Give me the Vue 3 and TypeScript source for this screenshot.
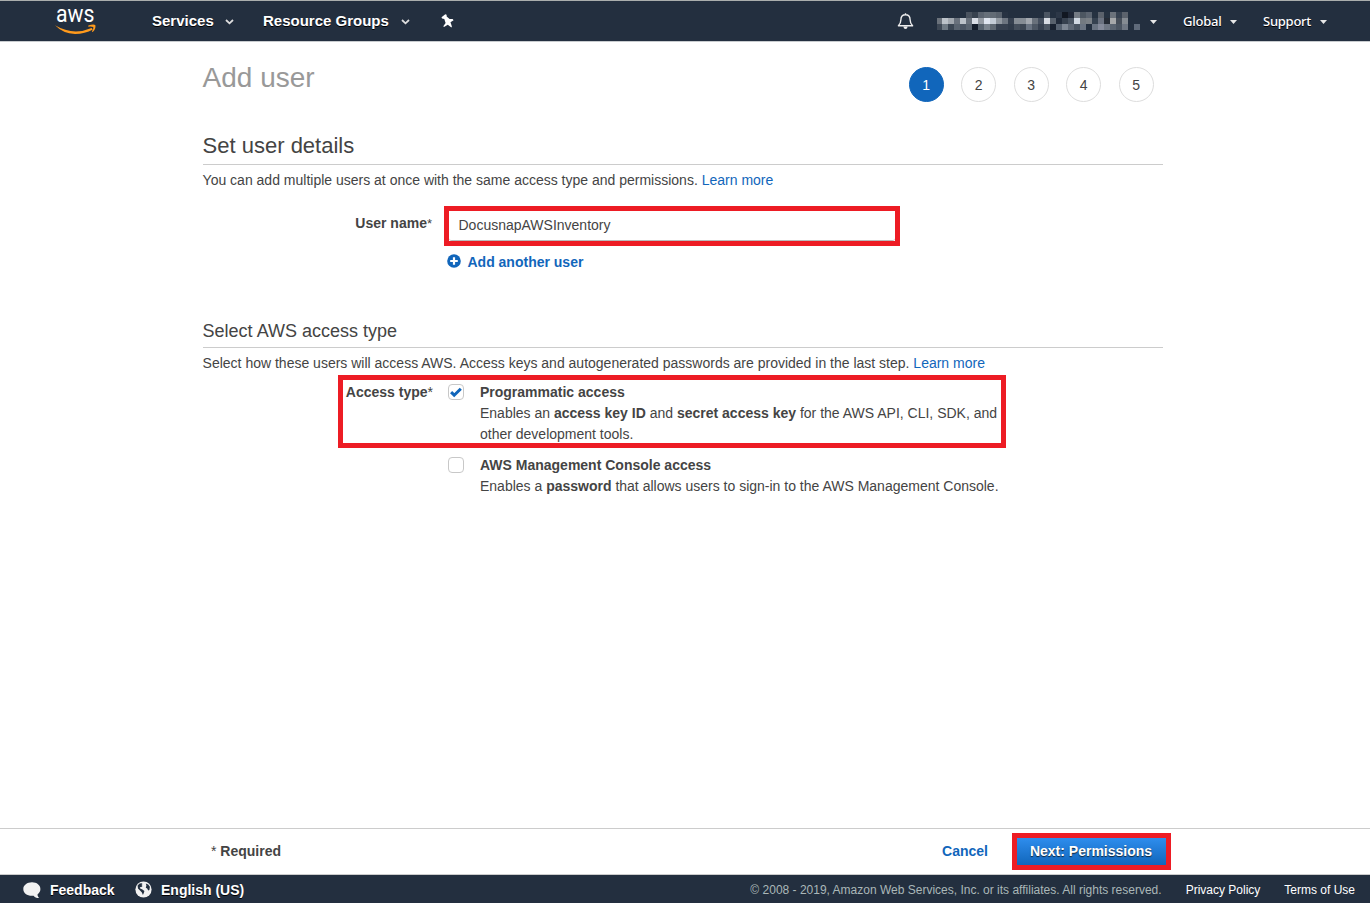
<script setup lang="ts">
import { ref } from 'vue'

const userName = ref('DocusnapAWSInventory')
const steps = [1, 2, 3, 4, 5]
const current = 1

// Colours of the masked account label, one array per row of cells
const mask: string[][] = [
  '232f3f 232f3f 232f3f 232f3f 232f3f 4a535f 38424f 5b6470 666f79 626b75 59626d 273242 232f3f 232f3f 232f3f 232f3f 232f3f 232f3f 4b5562 232f3f 2c3747 111722 202838 737a83 4c5661 5b6470 263241 5b626c 263241 6b727b 364150 5b626c'.split(' '),
  '6b727b bcc2c9 a2a8af 69717c bcc2c9 69717c d9dde5 969ca4 e0e6f0 c4ccd6 9299a1 6d7580 36404f 858c94 858c94 a3a8af 69717b 454f5e d7dbe3 58616d 202a3a 37414f 4a5563 d0d8e2 737a81 7a8086 364250 6b7280 262c36 a6a8aa 464e59 858b92'.split(' '),
  '3e4855 6f7a84 3b4653 5a6470 4c5664 5a6470 141d2b 56616d 7c858f 5f6872 36404f 36404f 2f3a49 444e5b 3c4653 6a7482 4d5764 36404f 4d5764 182130 566170 7e8794 5f6977 4a5563 6a7482 232f3f 6a7482 858b9b 6f7784 5a6471 4a5461 6f7783 232f3f 5f6a7a'.split(' '),
]
</script>

<template>
  <div class="page">
    <header class="topbar">
      <svg class="logo" width="44" height="30" viewBox="0 0 44 30">
        <text x="2" y="16.3" textLength="38.5" lengthAdjust="spacingAndGlyphs">aws</text>
        <path d="M1 19.3 Q19 30 37.6 22 L38.8 23.6 Q31 28 21 28 Q9 27.6 1 19.3Z" fill="#ff9a1c" />
        <path d="M34.3 19.4 Q40 17.8 41.4 19.2 Q42 22.8 38.7 26 L37.9 25.6 Q39.8 22.3 39.3 21.1 Q38 20.4 34.3 20.7Z" fill="#ff9a1c" />
      </svg>
      <a class="nav services">Services</a>
      <svg class="chev" width="9" height="6" viewBox="0 0 9 6"><path d="M1 1 L4.5 4.3 L8 1" /></svg>
      <a class="nav groups">Resource Groups</a>
      <svg class="chev" width="9" height="6" viewBox="0 0 9 6"><path d="M1 1 L4.5 4.3 L8 1" /></svg>
      <svg class="pin" width="14" height="15" viewBox="0 0 14 15">
        <path d="M4.3 0.3 L5.6 0.8 L5.7 2.4 L8.6 5 L11.6 4.9 L12.6 6.3 L9.5 8.2 L10.9 12.4 L10.4 13.6 L6.8 10.8 L3 12.9 L2.3 12.3 L4.6 9 L3.3 4.9 L1 4.4 L0.5 3.2Z" fill="#fff" />
      </svg>
      <div class="right">
        <svg class="bell" width="17" height="18" viewBox="0 0 17 18">
          <path d="M8.5 1.2 V2.4 M1.4 13.7 C3.6 11.7 3.9 10.5 3.9 7.8 C3.9 4.4 5.8 2.7 8.5 2.7 C11.2 2.7 13.1 4.4 13.1 7.8 C13.1 10.5 13.4 11.7 15.6 13.7Z" fill="none" stroke="#eee" stroke-width="1.4" stroke-linejoin="round" />
          <path d="M6.3 14.4 H10.7 Q10.3 17 8.5 17 Q6.7 17 6.3 14.4Z" fill="#eee" />
        </svg>
        <div class="mask">
          <div v-for="(row, r) in mask" :key="r" class="mask-row">
            <i v-for="(c, i) in row" :key="i" :style="{ background: '#' + c }"></i>
          </div>
        </div>
        <svg class="caret" width="7" height="4" viewBox="0 0 7 4"><path d="M0 0H7L3.5 4Z" /></svg>
        <a class="small global">Global</a>
        <svg class="caret" width="7" height="4" viewBox="0 0 7 4"><path d="M0 0H7L3.5 4Z" /></svg>
        <a class="small support">Support</a>
        <svg class="caret" width="7" height="4" viewBox="0 0 7 4"><path d="M0 0H7L3.5 4Z" /></svg>
      </div>
    </header>

    <main>
      <div class="title-row">
        <h1>Add user</h1>
        <ol class="steps">
          <li v-for="s in steps" :key="s" :class="{ active: s === current }">{{ s }}</li>
        </ol>
      </div>

      <h2>Set user details</h2>
      <p class="intro">You can add multiple users at once with the same access type and permissions. <a>Learn more</a></p>

      <div class="field">
        <label for="user">User name<span>*</span></label>
        <div class="marked-input"><input id="user" v-model="userName" type="text" spellcheck="false" /></div>
      </div>
      <a class="add">
        <svg width="14" height="14" viewBox="0 0 14 14"><circle cx="7" cy="7" r="6.8" fill="#1166bb" /><path d="M7 3.2V10.8M3.2 7H10.8" stroke="#fff" stroke-width="2.2" /></svg>
        Add another user
      </a>

      <h3>Select AWS access type</h3>
      <p class="intro second">Select how these users will access AWS. Access keys and autogenerated passwords are provided in the last step. <a>Learn more</a></p>

      <div class="option marked">
        <span class="option-label">Access type<span>*</span></span>
        <span class="box"><svg width="14" height="14" viewBox="0 0 14 14"><path d="M2.1 7.2 L5.2 10.2 L11.8 3.7" fill="none" stroke="#1166bb" stroke-width="3" /></svg></span>
        <div class="desc">
          <b>Programmatic access</b><br />
          Enables an <b>access key ID</b> and <b>secret access key</b> for the AWS API, CLI, SDK, and<br />other development tools.
        </div>
      </div>
      <div class="option">
        <span class="option-label"></span>
        <span class="box"></span>
        <div class="desc">
          <b>AWS Management Console access</b><br />
          Enables a <b>password</b> that allows users to sign-in to the AWS Management Console.
        </div>
      </div>
    </main>

    <div class="actions">
      <span class="required"><span>*</span> Required</span>
      <a class="cancel">Cancel</a>
      <button type="button">Next: Permissions</button>
    </div>

    <footer>
      <svg class="bubble" width="18" height="17" viewBox="0 0 18 17"><path d="M9 0.2C13.8 0.2 17.4 3 17.4 7C17.4 9.3 16.3 11.2 14.5 12.4C14.6 14 15.3 15.2 16.3 16.1C13.6 16.2 11.6 15.2 10.6 13.7C4.8 14.4 0.3 11.5 0.3 7C0.3 3 4.2 0.2 9 0.2Z" fill="#f2f2f2" /></svg>
      <a class="foot-bold feedback">Feedback</a>
      <svg class="globe" width="17" height="17" viewBox="0 0 17 17">
        <circle cx="8.5" cy="8.5" r="8.1" fill="#f2f2f2" />
        <path d="M2.6 4.6 L4.6 2.6 L6.6 2.2 L7.6 3 L6.4 4 L7.6 5 L6 6.2 L4.8 6 L5.2 7.4 L7.4 8.4 L9.4 10 L8.8 12 L7.9 14 L6.9 11.6 L5 9.6 L3 7.4Z M10.8 2.4 L13.2 3.4 L14.9 5.8 L14.4 9 L13.2 9.4 L12.2 7.4 L10.8 6.8 L11.4 4.6Z" fill="#232f3f" />
      </svg>
      <a class="foot-bold">English (US)</a>
      <span class="copy">© 2008 - 2019, Amazon Web Services, Inc. or its affiliates. All rights reserved.</span>
      <a class="legal privacy">Privacy Policy</a>
      <a class="legal">Terms of Use</a>
    </footer>
  </div>
</template>

<style>
body {
  overflow: hidden;
}
</style>

<style scoped>
* {
  box-sizing: border-box;
}
.page {
  width: 1370px;
  height: 903px;
  display: flex;
  flex-direction: column;
  background: #fff;
  color: #444;
  font: 14px/21px 'Liberation Sans', Arial, sans-serif;
}
.topbar {
  height: 42px;
  flex: none;
  display: flex;
  align-items: center;
  background: #232f3f;
  border-top: 1px solid #aaaead;
  border-bottom: 1px solid #c8cccf;
  color: #fff;
  padding-left: 54px;
  white-space: nowrap;
}
.logo {
  flex: none;
  margin-top: -1px;
  overflow: visible;
}
.logo text {
  font: 400 23px Roboto, sans-serif;
  fill: #fff;
}
.nav {
  font-size: 15px;
  font-weight: bold;
  text-shadow: 0 1px 0 #000;
  margin-top: -2px;
}
.services {
  width: 73px;
  margin-left: 54px;
}
.groups {
  width: 138px;
  margin-left: 29px;
}
.chev {
  margin-top: 2px;
}
.chev path {
  fill: none;
  stroke: #ddd;
  stroke-width: 1.8;
}
.pin {
  margin-left: 31px;
}
.right {
  display: flex;
  align-items: center;
  margin-left: auto;
  padding-right: 43px;
}
.mask {
  width: 203px;
  margin: -1px 10px 0 23px;
}
.mask-row {
  display: flex;
  height: 6px;
}
.mask-row i {
  width: 6px;
  height: 6px;
  flex: none;
}
.mask-row i:first-child {
  width: 5px;
}
.bell {
  margin-top: 0;
}
.caret {
  fill: #e8e8e8;
  margin-top: 2px;
}
.small {
  font: 500 13px/20px 'Noto Sans', sans-serif;
  letter-spacing: -0.25px;
  text-shadow: 0 1px 0 #000;
}
.global {
  width: 47px;
  margin-left: 26px;
}
.support {
  width: 57px;
  margin-left: 26px;
}
main {
  width: 960px;
  margin-left: 202.6px;
  flex: 1;
}
h1,
h2,
h3,
p,
ol {
  margin: 0;
  padding: 0;
  font-weight: normal;
}
.title-row {
  display: flex;
  justify-content: space-between;
  height: 60px;
  padding: 25px 9px 0 0;
}
h1 {
  font-size: 28px;
  line-height: 32px;
  margin-top: -5px;
  color: #999;
}
.steps {
  display: flex;
  gap: 17.5px;
  list-style: none;
}
.steps li {
  width: 35px;
  height: 35px;
  border: 1px solid #ddd;
  border-radius: 50%;
  text-align: center;
  line-height: 35px;
}
.steps .active {
  background: #1166bb;
  border-color: #1166bb;
  color: #fff;
}
h2 {
  font-size: 22px;
  line-height: 26px;
  height: 32px;
  margin-top: 31px;
  border-bottom: 1px solid #ccc;
}
.intro {
  margin-top: 5px;
  white-space: nowrap;
}
a {
  color: #1166bb;
}
header a,
footer a {
  color: #fff;
}
.field {
  display: flex;
  margin-top: 15px;
}
label {
  width: 229.4px;
  text-align: right;
  font-weight: bold;
  padding-top: 7px;
}
label span,
.option-label span,
.required span {
  font-weight: normal;
}
label span {
  font-size: 13px;
}
.marked-input {
  width: 456px;
  height: 40px;
  margin-left: 12px;
  border: 5px solid #ed1c24;
}
input {
  display: block;
  width: 446px;
  height: 30px;
  border: 0;
  border-bottom: 1px solid #bbb;
  border-radius: 3px;
  padding: 0 10px 2px 9.5px;
  outline: 0;
  color: #444;
  font: 14px 'Liberation Sans', Arial, sans-serif;
}
.add {
  display: flex;
  align-items: center;
  gap: 6.5px;
  margin: 6px 0 0 244.4px;
  font-weight: bold;
}
.add svg {
  margin-top: -3px;
}
h3 {
  font-size: 18px;
  line-height: 22px;
  height: 28px;
  margin-top: 47px;
  border-bottom: 1px solid #ccc;
}
.second {
  margin-top: 5px;
}
.option {
  display: flex;
  width: 668px;
  margin-left: 135.4px;
  padding: 0 5px;
  white-space: nowrap;
}
.option.marked {
  height: 73px;
  margin-top: 1px;
  margin-bottom: 7px;
  padding: 2px 0 0;
  border: 5px solid #ed1c24;
}
.option-label {
  width: 90px;
  text-align: right;
  font-weight: bold;
}
.box {
  width: 16px;
  height: 16px;
  margin: 2px 16px 0 15px;
  border: 1px solid #c8c8c8;
  border-radius: 4px;
  flex: none;
}
.box svg {
  display: block;
}
.actions {
  flex: none;
  height: 47px;
  display: flex;
  align-items: center;
  border-top: 1px solid #ccc;
  border-bottom: 1px solid #ccc;
  font-weight: bold;
  padding-left: 211px;
}
.required,
.cancel {
  margin-top: -1px;
}
.cancel {
  margin-left: auto;
}
button {
  width: 159px;
  height: 37px;
  margin: 0 199px 0 24px;
  padding: 0 1px 2px 0;
  border: 5px solid #ed1c24;
  background: linear-gradient(#2e8ded, #1166bb) padding-box;
  color: #fff;
  font: bold 14px 'Liberation Sans', Arial, sans-serif;
  text-shadow: 0 1px 1px #123;
}
footer {
  flex: none;
  height: 28px;
  display: flex;
  align-items: center;
  background: #232f3f;
  padding: 2px 15px 0 23px;
  font-size: 12px;
  white-space: nowrap;
}
.foot-bold {
  font-size: 14px;
  font-weight: bold;
  text-shadow: 0 1px 0 #000;
}
.feedback {
  width: 65px;
  margin-left: 9px;
}
.globe {
  margin: -1px 9.5px 0 19.5px;
}
.copy {
  color: #aab7b8;
  margin-left: auto;
}
.privacy {
  margin: 0 24px;
}
</style>
